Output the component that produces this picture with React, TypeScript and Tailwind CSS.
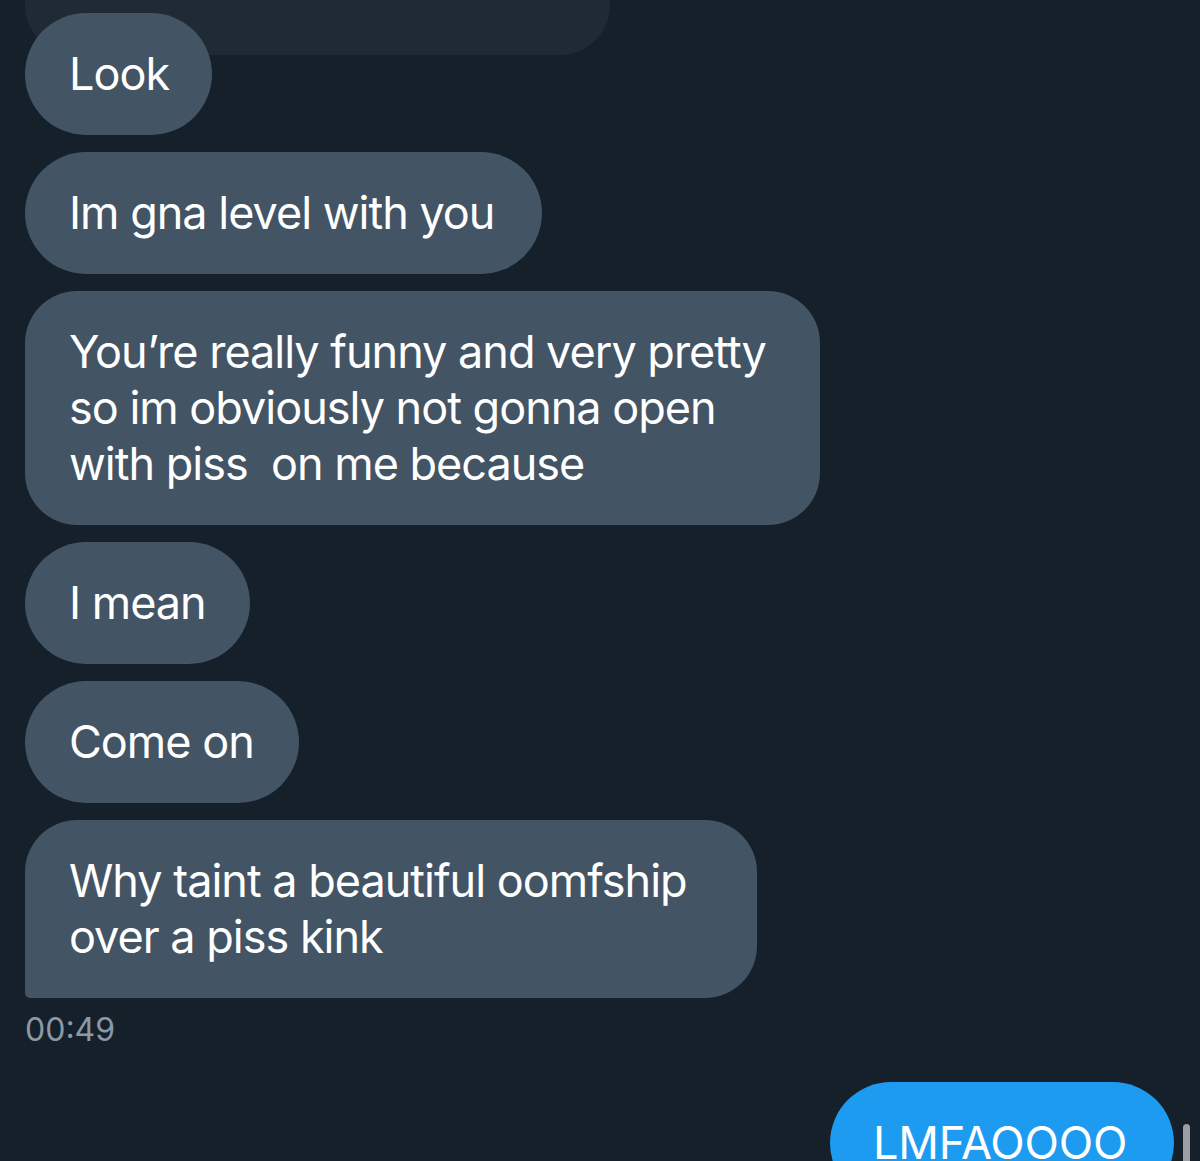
import React from "react";

const font = { fontFamily: "Inter, 'Liberation Sans', sans-serif" };

export default function App() {
  const base =
    "relative bg-[#435465] text-white text-[45px] leading-[56px] pl-[44px] py-[33px] tracking-[-1px]";
  return (
    <div className="w-[1200px] h-[1161px] bg-[#15202b] overflow-hidden relative" style={font}>
      <div className="flex flex-col items-start pl-[25px]">
        <div className="w-[585px] h-[100px] -mt-[45px] rounded-[55px] bg-[#202a35]" />
        <div className={`${base} -mt-[42px] w-[187px] rounded-[61px]`}>Look</div>
        <div className={`${base} mt-[17px] w-[517px] rounded-[61px]`}>Im gna level with you</div>
        <div className={`${base} mt-[17px] w-[795px] rounded-[52px]`}>
          You’re really funny and very pretty
          <br />
          so im obviously not gonna open
          <br />
          with piss&nbsp; on me because
        </div>
        <div className={`${base} mt-[17px] w-[225px] rounded-[61px]`}>I mean</div>
        <div className={`${base} mt-[17px] w-[274px] rounded-[61px]`}>Come on</div>
        <div className={`${base} mt-[17px] w-[732px] rounded-[52px] rounded-bl-[5px]`}>
          Why taint a beautiful oomfship
          <br />
          over a piss kink
        </div>
        <div className="mt-[12px] text-[32px] leading-[40px] text-[#8b98a5]">00:49</div>
      </div>
      <div className="flex justify-end pr-[26px] mt-[32px]">
        <div className="bg-[#1d9bf0] text-white text-[45px] leading-[56px] pl-[43px] pt-[33px] pb-[33px] w-[344px] rounded-[61px] tracking-[-0.2px]">
          LMFAOOOO
        </div>
      </div>
      <div className="absolute left-[1183px] top-[1124px] w-[7px] h-[60px] rounded-full bg-[#9b9ea3]" />
    </div>
  );
}
